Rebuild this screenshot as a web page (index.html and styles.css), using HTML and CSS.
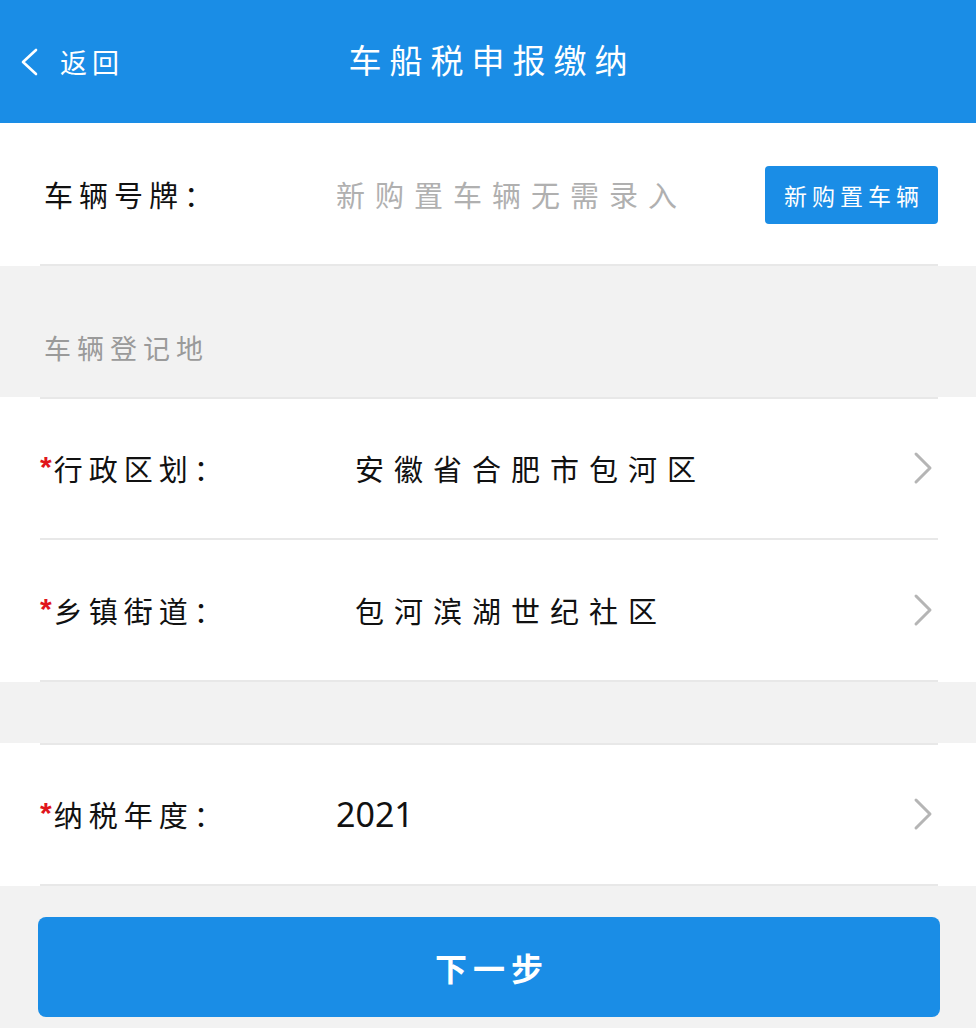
FILE: index.html
```html
<!DOCTYPE html>
<html lang="zh-CN">
<head>
	<meta charset="UTF-8">
	<title>车船税申报缴纳</title>
	<link rel="stylesheet" href="styles.css">
</head>
<body>
	<div class="header">
		<div class="back">
			<svg width="22" height="28" viewBox="0 0 22 28"><path d="M18 2 L5 14 L18 26" fill="none" stroke="#fff" stroke-width="2.6" stroke-linecap="round" stroke-linejoin="round"/></svg>
			<span>返回</span>
		</div>
		<div class="title">车船税申报缴纳</div>
	</div>

	<div class="group first">
		<div class="row">
			<div class="label">车辆号牌：</div>
			<div class="value placeholder">新购置车辆无需录入</div>
			<div class="btn-small">新购置车辆</div>
		</div>
	</div>

	<div class="section-title">车辆登记地</div>

	<div class="group lined">
		<div class="row">
			<div class="label"><i>*</i>行政区划：</div>
			<div class="value indent">安徽省合肥市包河区</div>
			<svg class="arrow" width="22" height="34" viewBox="0 0 22 34"><path d="M4 3 L18 17 L4 31" fill="none" stroke="#b5b5b5" stroke-width="3" stroke-linecap="round" stroke-linejoin="round"/></svg>
		</div>
		<div class="row">
			<div class="label"><i>*</i>乡镇街道：</div>
			<div class="value indent">包河滨湖世纪社区</div>
			<svg class="arrow" width="22" height="34" viewBox="0 0 22 34"><path d="M4 3 L18 17 L4 31" fill="none" stroke="#b5b5b5" stroke-width="3" stroke-linecap="round" stroke-linejoin="round"/></svg>
		</div>
	</div>

	<div class="gap"></div>

	<div class="group lined">
		<div class="row">
			<div class="label"><i>*</i>纳税年度：</div>
			<div class="value num">2021</div>
			<svg class="arrow" width="22" height="34" viewBox="0 0 22 34"><path d="M4 3 L18 17 L4 31" fill="none" stroke="#b5b5b5" stroke-width="3" stroke-linecap="round" stroke-linejoin="round"/></svg>
		</div>
	</div>

	<div class="btn-next">下一步</div>
</body>
</html>
```

FILE: styles.css
```css
*{margin: 0;padding: 0;box-sizing: border-box;}
body {background: #f2f2f2;font-family: "Noto Sans CJK SC", "Noto Sans", sans-serif;color: #111;width: 976px;}
.header {height: 123px;background: #1a8de6;color: #fff;display: flex;align-items: center;position: relative;}
.back {display: flex;align-items: center;padding-left: 18px;gap: 20px;font-size: 27px;letter-spacing: 5px;}
.back span {line-height: 28px;}
.title {position: absolute;left: 0;right: 0;text-align: center;font-size: 33px;letter-spacing: 8px;padding-left: 8px;top: 39px;line-height: 40px;pointer-events: none;}
.group {background: #fff;}
.group.lined {padding-top: 1px;background: #fff linear-gradient(#e8e8e8, #e8e8e8) no-repeat 40px 0 / 898px 2px;}
.row {margin: 0 38px 0 40px;height: 142px;border-bottom: 2px solid #e8e8e8;display: flex;align-items: center;}
.group.first .row {height: 143px;}
.label {width: 296px;font-size: 29px;letter-spacing: 6px;padding-left: 4px;white-space: nowrap;}
.label i {font-style: normal;font-family: "Liberation Sans", sans-serif;font-weight: bold;color: #e0161b;font-size: 30px;letter-spacing: 0;margin-left: -4px;margin-right: 2px;vertical-align: 4px;}
.value {flex: 1;font-size: 29px;letter-spacing: 10px;white-space: nowrap;}
.value.indent {padding-left: 19px;}
.placeholder {color: #b0b0b0;}
.num {font-family: "Noto Sans", sans-serif;font-size: 34px;letter-spacing: 0;}
.btn-small {width: 173px;height: 58px;margin-top: 2px;background: #1a8de6;color: #fff;border-radius: 4px;font-size: 23px;letter-spacing: 5px;padding-left: 5px;display: flex;align-items: center;justify-content: center;}
.arrow {margin-right: 4px;}
.section-title {height: 131px;display: flex;align-items: flex-end;padding: 0 0 35px 44px;font-size: 27px;letter-spacing: 6px;color: #9a9a9a;line-height: 28px;}
.gap {height: 61px;}
.btn-next {margin: 31px 36px 0 38px;height: 100px;background: #1a8de6;color: #fff;border-radius: 8px;display: flex;align-items: center;justify-content: center;font-size: 32px;font-weight: bold;letter-spacing: 6px;padding-left: 6px;}
```
